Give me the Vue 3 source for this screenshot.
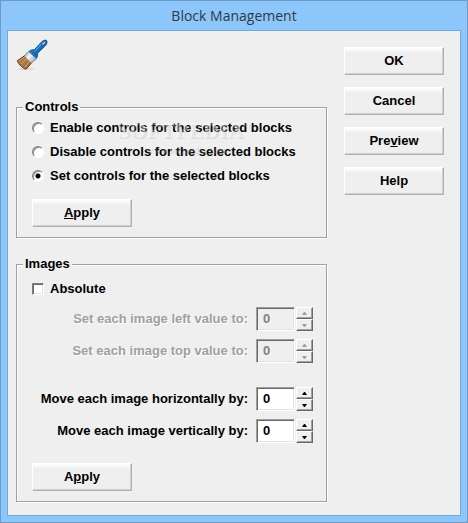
<template>
    <div class="window">
        <header class="title">Block Management</header>
        <main class="client">
            <div class="left">
                <svg class="brush" viewBox="0 0 32 32" width="32" height="32" aria-hidden="true">
                    <defs>
                        <linearGradient id="handle" x1="0" y1="0" x2="1" y2="1">
                            <stop offset="0" stop-color="#3a97da" />
                            <stop offset=".5" stop-color="#1670bd" />
                            <stop offset="1" stop-color="#0a4586" />
                        </linearGradient>
                        <linearGradient id="metal" x1="0" y1="0" x2="1" y2="1">
                            <stop offset="0" stop-color="#8d939c" />
                            <stop offset=".4" stop-color="#f2f3f6" />
                            <stop offset="1" stop-color="#8d919b" />
                        </linearGradient>
                    </defs>
                    <ellipse cx="10" cy="30" rx="8" ry="1" fill="#d9d7d5" />
                    <path d="M12.500 13 L14.500 11.300 L18.500 10.500 L26 2.500 Q28.500 .6 30.500 1.300 Q31.900 3 30 6 L21.800 14 L21 18.500 L19.500 20 Z" fill="url(#handle)" stroke="#0c4c8a" stroke-width=".9" />
                    <path d="M19 12 L25.500 5" stroke="#5aaeea" stroke-width="1" />
                    <ellipse cx="27.700" cy="4.300" rx="2.200" ry="1" transform="rotate(-46 27.700 4.300)" fill="#efefef" stroke="#124f87" stroke-width=".6" />
                    <path d="M9 16.500 L1.300 21.700 Q3.500 27.500 10 30.300 L15.500 24 Z" fill="#b98148" stroke="#5d3a20" stroke-width="1" />
                    <path d="M10 18 L3.500 23.500 M11.500 20 L5.500 26 M12.500 21.500 L7.500 28 M14 23 L9.500 29.500" stroke="#82522a" stroke-width=".8" />
                    <path d="M9.500 17.500 L2.800 22.300 M11.500 19.200 L5.300 24.800 M13.300 22.200 L9 28.200" stroke="#e2b67d" stroke-width=".8" />
                    <path d="M12.500 12.300 L20.300 19.800 Q18.500 22.500 15 24.300 L8.500 17.200 Q9.800 14 12.500 12.300 Z" fill="url(#metal)" stroke="#777d88" stroke-width=".7" />
                </svg>

                <fieldset class="group controls">
                    <legend>Controls</legend>
                    <label v-for="item in modes" :key="item.value" class="option">
                        <input v-model="mode" type="radio" name="mode" :value="item.value">
                        <span>{{ item.text }}</span>
                    </label>
                    <button type="button" class="btn apply"><u>A</u>pply</button>
                    <div class="watermark" aria-hidden="true">
                        <div class="brand">SOFTPEDIA<sup>™</sup></div>
                        <div class="site">www.softpedia.com</div>
                    </div>
                </fieldset>

                <fieldset class="group images">
                    <legend>Images</legend>
                    <label class="option">
                        <input v-model="absolute" type="checkbox">
                        <span>Absolute</span>
                    </label>
                    <div class="rows">
                        <div
                            v-for="field in fields"
                            :key="field.id"
                            class="row"
                            :class="{ disabled: isDisabled(field), first: field.id === 'horizontal' }"
                        >
                            <label :for="field.id">{{ field.text }}</label>
                            <div class="spinner">
                                <input :id="field.id" v-model.number="field.value" type="text" :disabled="isDisabled(field)">
                                <div class="arrows">
                                    <button type="button" aria-label="Increase" :disabled="isDisabled(field)" @click="field.value++">
                                        <svg viewBox="0 0 5 3" width="5" height="3"><path d="M0 3 L2 0 H3 L5 3 Z" /></svg>
                                    </button>
                                    <button type="button" aria-label="Decrease" :disabled="isDisabled(field)" @click="field.value--">
                                        <svg viewBox="0 0 5 3" width="5" height="3"><path d="M0 0 H5 L3 3 H2 Z" /></svg>
                                    </button>
                                </div>
                            </div>
                        </div>
                    </div>
                    <button type="button" class="btn apply">A<u>p</u>ply</button>
                </fieldset>
            </div>

            <div class="actions">
                <button type="button" class="btn">OK</button>
                <button type="button" class="btn">Cancel</button>
                <button type="button" class="btn">Pre<u>v</u>iew</button>
                <button type="button" class="btn">Help</button>
            </div>
        </main>
    </div>
</template>

<script setup>
import { ref } from 'vue';

const modes = [
    { value: 'enable', text: 'Enable controls for the selected blocks' },
    { value: 'disable', text: 'Disable controls for the selected blocks' },
    { value: 'set', text: 'Set controls for the selected blocks' }
];
const mode = ref('set');
const absolute = ref(false);

const fields = ref([
    { id: 'left', text: 'Set each image left value to:', value: 0, absolute: true },
    { id: 'top', text: 'Set each image top value to:', value: 0, absolute: true },
    { id: 'horizontal', text: 'Move each image horizontally by:', value: 0, absolute: false },
    { id: 'vertical', text: 'Move each image vertically by:', value: 0, absolute: false }
]);

// left/top only work in absolute mode, the move fields only in relative mode
const isDisabled = (field) => field.absolute !== absolute.value;
</script>

<style>
body {
    margin: 0;
    background: #8cc6fa;
}
</style>

<style scoped>
.window {
    box-sizing: border-box;
    display: flex;
    flex-direction: column;
    min-height: 100vh;
    padding: 0 6px 6px;
    border: 1px solid #6c9bc7;
    background: #8cc6fa;
    color: #000;
    font: bold 13px/16px "Liberation Sans", Arial, sans-serif;
}

.title {
    height: 29px;
    color: #2f3a45;
    font: 14px/29px "Open Sans", "Noto Sans", sans-serif;
    text-align: center;
}

.client {
    display: flex;
    flex: 1;
    gap: 17px;
    padding: 8px 16px 12px 8px;
    border: 1px solid #73a8d8;
    background: #efefef;
}

.left {
    flex: 1;
    min-width: 0;
}

.brush {
    display: block;
    margin-bottom: 28px;
}

.group {
    position: relative;
    box-sizing: border-box;
    min-width: 0;
    margin: 0;
    padding: 1px 13px 10px 15px;
    border: 1px solid #a0a0a0;
    box-shadow: 1px 1px 0 #fff, inset 1px 1px 0 #fff;
}

.images {
    margin-top: 18px;
    padding-top: 5px;
}

legend {
    margin-left: -9px;
    padding: 0 2px;
    background: #efefef;
}

.option {
    display: flex;
    align-items: center;
    gap: 6px;
    width: max-content;
    height: 24px;
}

.option input {
    appearance: none;
    box-sizing: border-box;
    width: 12px;
    height: 12px;
    margin: 0;
    border: 1px solid;
    border-color: #808080 #fff #fff #808080;
    background: #fff;
}

.option input[type="radio"] {
    border-radius: 50%;
    box-shadow: inset 1px 1px 0 #909090;
}

.option input[type="checkbox"] {
    box-shadow: inset 1px 1px 0 #696969, inset -1px -1px 0 #e3e3e3;
}

.option input[type="radio"]:checked {
    background: radial-gradient(circle, #000 2px, #fff 3px);
}

.option input[type="checkbox"]:checked {
    background: linear-gradient(#000, #000) center / 6px 6px no-repeat #fff;
}

.btn {
    display: block;
    box-sizing: border-box;
    width: 100px;
    height: 28px;
    padding: 0;
    border: 1px solid;
    border-color: #fff #b0b0b0 #b0b0b0 #fff;
    border-radius: 1px;
    background: linear-gradient(#fff, #efefef 5px);
    box-shadow: inset -1px -1px 0 #cfcfcf;
    color: #000;
    font: inherit;
}

.apply {
    margin-top: 11px;
}

.images .apply {
    margin-top: 16px;
}

.actions {
    display: flex;
    flex-direction: column;
    gap: 12px;
    padding-top: 8px;
}

.rows {
    padding-top: 2px;
}

.row {
    display: flex;
    align-items: center;
    justify-content: flex-end;
    gap: 8px;
    padding: 4px 0;
}

.row.first {
    margin-top: 16px;
}

.disabled {
    color: #a0a0a0;
    text-shadow: 1px 1px 0 #fff;
}

.spinner {
    display: flex;
    gap: 1px;
}

.spinner input {
    box-sizing: border-box;
    width: 39px;
    height: 24px;
    padding: 0 6px 2px;
    border: 1px solid;
    border-color: #a0a0a0 #fff #fff #a0a0a0;
    background: #fff;
    box-shadow: inset 1px 1px 0 #696969, inset -1px -1px 0 #e3e3e3;
    color: #000;
    font: inherit;
}

.spinner input:disabled {
    background: #efefef;
    color: #808080;
}

.arrows {
    display: flex;
    flex-direction: column;
}

.arrows button {
    display: flex;
    align-items: center;
    justify-content: center;
    box-sizing: border-box;
    width: 17px;
    height: 12px;
    padding: 0;
    border: 1px solid;
    border-color: #fff #696969 #696969 #fff;
    background: #efefef;
    box-shadow: inset -1px -1px 0 #a0a0a0;
}

.arrows path {
    fill: #000;
}

.disabled .arrows path {
    fill: #a0a0a0;
}

.watermark {
    position: absolute;
    top: 4px;
    left: 101px;
    color: rgba(239, 239, 239, .15);
    text-align: center;
    pointer-events: none;
}

.brand {
    font: bold 22px/24px "Liberation Serif", serif;
    text-shadow: -1px -1px 0 rgba(255, 255, 255, .35), 1px 1px 0 rgba(150, 150, 150, .2);
}

.brand sup {
    font-size: 9px;
    line-height: 0;
}

.site {
    font: 10px/14px "Liberation Serif", serif;
    text-shadow: 1px 1px 0 rgba(150, 150, 150, .35);
}
</style>
